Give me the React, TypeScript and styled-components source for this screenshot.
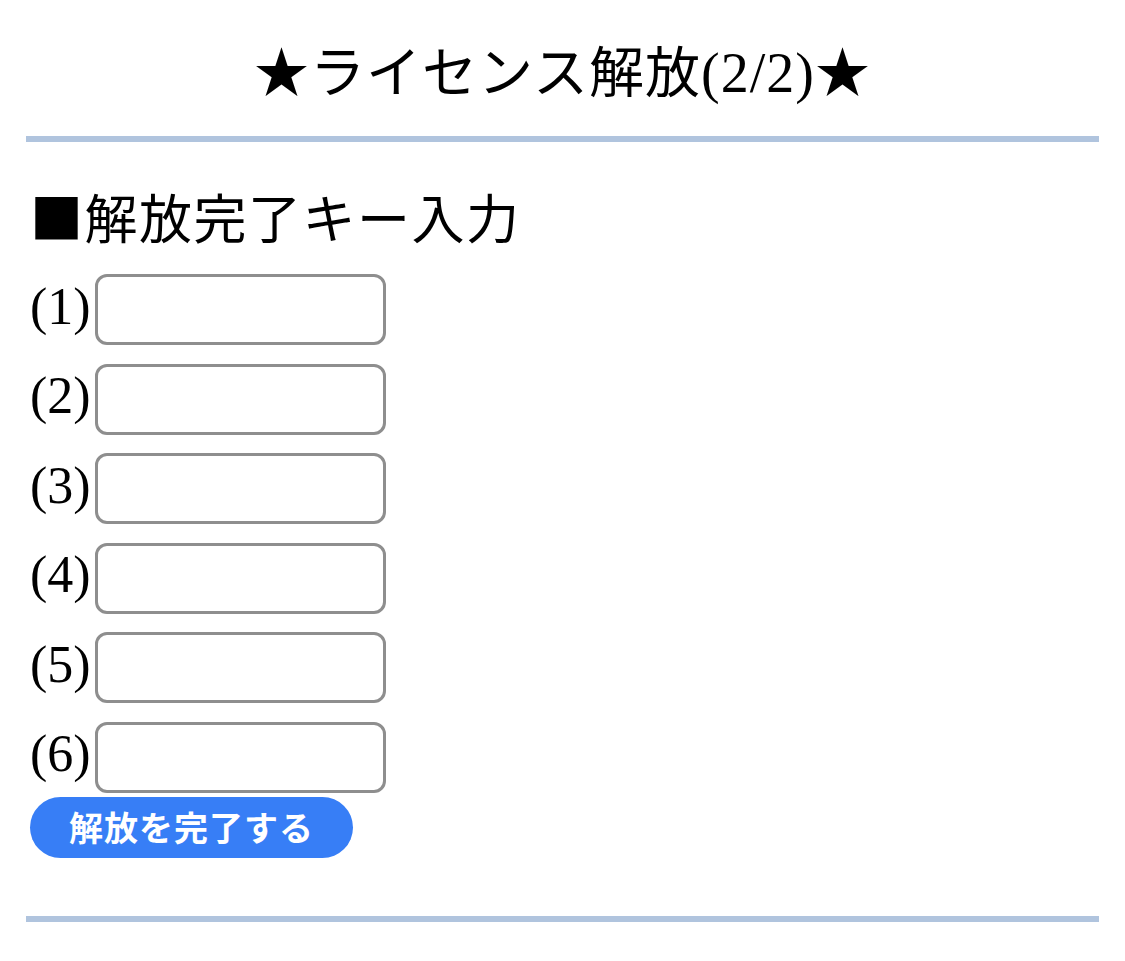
import React from "react";
import styled, { createGlobalStyle } from "styled-components";

const GlobalStyle = createGlobalStyle`
  body {
    margin: 0;
    background: #ffffff;
    font-family: "Liberation Serif", "Noto Sans CJK JP", serif;
    color: #000;
  }
`;

const Page = styled.div`
  padding: 0 26px;
`;

const Title = styled.h1`
  margin: 0;
  padding-top: 37px;
  height: 136px;
  box-sizing: border-box;
  text-align: center;
  font-family: "Noto Sans CJK JP", sans-serif;
  font-size: 55px;
  font-weight: normal;
  line-height: 62px;
  letter-spacing: 1px;
`;

const Latin = styled.span`
  font-family: "Liberation Serif", serif;
  font-size: 56px;
`;

const Divider = styled.hr`
  margin: 0;
  border: none;
  height: 6px;
  background: #b0c4de;
`;

const Section = styled.div`
  padding: 39px 3px 0 4px;
`;

const Heading = styled.h2`
  margin: 0 0 23px;
  font-family: "Noto Sans CJK JP", sans-serif;
  font-size: 53px;
  font-weight: normal;
  line-height: 70px;
  letter-spacing: 1.5px;
`;

const Fields = styled.div`
  display: flex;
  flex-direction: column;
  gap: 18.6px;
`;

const Row = styled.label`
  display: flex;
  align-items: center;
  height: 71px;
  font-size: 52px;
`;

const Num = styled.span`
  display: inline-block;
  width: 65px;
  line-height: 60px;
  margin-bottom: 6px;
`;

const KeyInput = styled.input`
  width: 291px;
  height: 71px;
  box-sizing: border-box;
  border: 3px solid #8e8e8e;
  border-radius: 12px;
  background: #fff;
  font-size: 30px;
  padding: 0 10px;
  outline: none;
`;

const Submit = styled.button`
  margin-top: 4px;
  width: 323px;
  height: 61px;
  border: none;
  border-radius: 31px;
  background: #377ef6;
  color: #fff;
  font-family: "Noto Sans CJK JP", sans-serif;
  font-weight: bold;
  font-size: 34px;
  letter-spacing: 1px;
  padding: 0 0 2px;
  cursor: pointer;
`;

const Footer = styled.div`
  padding-top: 58px;
`;

const fields = [1, 2, 3, 4, 5, 6];

const App: React.FC = () => {
  return (
    <Page>
      <GlobalStyle />
      <Title>
        ★ライセンス解放<Latin>(2/2)</Latin>★
      </Title>
      <Divider />
      <Section>
        <Heading>■解放完了キー入力</Heading>
        <Fields>
          {fields.map((n) => (
            <Row key={n}>
              <Num>({n})</Num>
              <KeyInput type="text" />
            </Row>
          ))}
        </Fields>
        <Submit type="button">解放を完了する</Submit>
      </Section>
      <Footer>
        <Divider />
      </Footer>
    </Page>
  );
};

export default App;
